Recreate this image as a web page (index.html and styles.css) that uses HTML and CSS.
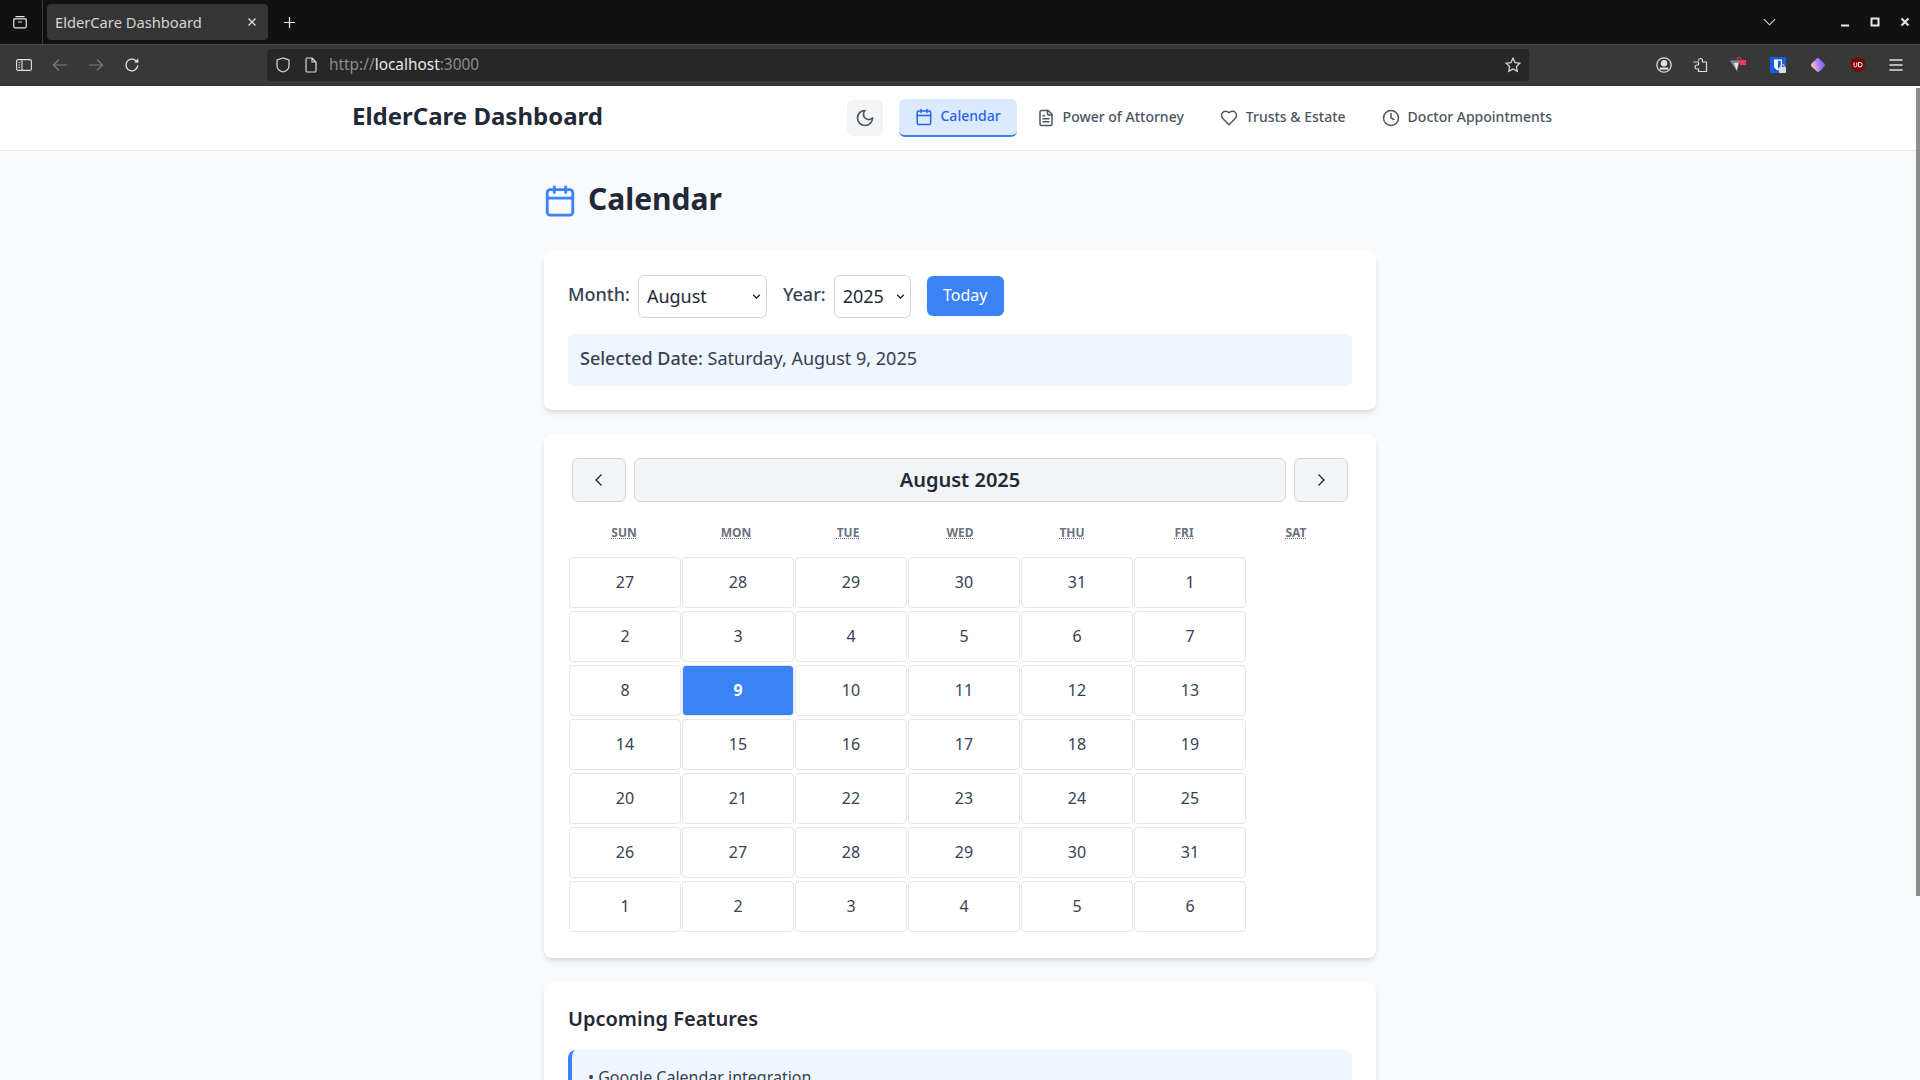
FILE: index.html
```html
<!DOCTYPE html>
<html lang="en">

<head>
    <meta charset="UTF-8">
    <meta name="viewport" content="width=device-width, initial-scale=1.0">
    <title>ElderCare Dashboard</title>
    <link rel="stylesheet" href="styles.css">
</head>

<body>
    <div class="tabbar">
        <div class="tabgroup">
            <svg class="ff-icon" viewBox="0 0 16 16" fill="none" stroke="#e8e8e8" stroke-width="1.2"><path d="M3.5 2.6h9M1.8 4.8h12.4M1.8 4.8v7.6a1.4 1.4 0 0 0 1.4 1.4h9.6a1.4 1.4 0 0 0 1.4-1.4V4.8M6 8h4"/></svg>
        </div>
        <div class="tab">
            <span class="tab-title">ElderCare Dashboard</span>
            <svg class="tab-close" viewBox="0 0 10 10" fill="none" stroke="#dcdcdc" stroke-width="1.4"><path d="M1.5 1.5l7 7M8.5 1.5l-7 7"/></svg>
        </div>
        <svg class="tab-new" viewBox="0 0 14 14" fill="none" stroke="#e8e8e8" stroke-width="1.3"><path d="M7 1v12M1 7h12"/></svg>
        <svg class="tab-list" viewBox="0 0 14 8" fill="none" stroke="#d8d8d8" stroke-width="1.2"><path d="M1 1l6 6 6-6"/></svg>
        <div class="winbtns">
            <svg viewBox="0 0 10 10" fill="#e8e8e8"><rect x="1" y="7.5" width="8" height="2"/></svg>
            <svg viewBox="0 0 10 10" fill="none" stroke="#e8e8e8" stroke-width="2"><rect x="1.5" y="1.5" width="7" height="7"/></svg>
            <svg viewBox="0 0 10 10" fill="none" stroke="#e8e8e8" stroke-width="2"><path d="M1.5 1.5l7 7M8.5 1.5l-7 7"/></svg>
        </div>
    </div>

    <div class="toolbar">
        <div class="nav-icons">
            <svg class="ff-icon" viewBox="0 0 16 16" fill="none" stroke="#e0e0e0" stroke-width="1.1"><rect x="0.6" y="2.6" width="14.8" height="10.8" rx="1.5"/><path d="M6 2.6v10.8M2.5 5.5h1.6M2.5 8h1.6M2.5 10.5h1.6"/></svg>
            <svg class="ff-icon" viewBox="0 0 16 16" fill="none" stroke="#7a7a7a" stroke-width="1.2"><path d="M15 8H1.5M7 2.5L1.5 8 7 13.5"/></svg>
            <svg class="ff-icon" viewBox="0 0 16 16" fill="none" stroke="#7a7a7a" stroke-width="1.2"><path d="M1 8h13.5M9 2.5L14.5 8 9 13.5"/></svg>
            <svg class="ff-icon" viewBox="0 0 16 16" fill="none" stroke="#e0e0e0" stroke-width="1.3"><path d="M13.8 8.4A5.9 5.9 0 1 1 11.6 3.4L14 5.2"/><path d="M14.3 1.2v4.4H9.9" fill="#e0e0e0" stroke="none"/></svg>
        </div>
        <div class="urlbar">
            <svg class="ff-icon" viewBox="0 0 16 16" fill="none" stroke="#dcdcdc" stroke-width="1.2"><path d="M8 1L2 3v5.5C2 12 5 14.3 8 15c3-.7 6-3 6-6.5V3z"/></svg>
            <svg class="ff-icon" viewBox="0 0 16 16" fill="none" stroke="#dcdcdc" stroke-width="1.2"><path d="M3 2.4A1.4 1.4 0 0 1 4.4 1H9l4 4v8.6a1.4 1.4 0 0 1-1.4 1.4H4.4A1.4 1.4 0 0 1 3 13.6zM9 1v4h4"/></svg>
            <span class="url"><span class="dim">http://</span>localhost<span class="dim">:3000</span></span>
            <svg class="ff-icon star" viewBox="0 0 16 16" fill="none" stroke="#dcdcdc" stroke-width="1.2"><path d="M8 1.2l2.1 4.4 4.8.6-3.5 3.3.9 4.8L8 12l-4.3 2.3.9-4.8L1.1 6.2l4.8-.6z"/></svg>
        </div>
        <div class="ext-icons">
            <svg class="ff-icon" viewBox="0 0 16 16" fill="none" stroke="#e0e0e0" stroke-width="1.2"><circle cx="8" cy="8" r="7.2"/><circle cx="8" cy="6.2" r="2.6" fill="#e0e0e0"/><path d="M3.6 11.6h8.8" stroke-width="2.2"/></svg>
            <svg class="ff-icon" viewBox="0 0 16 16" fill="none" stroke="#e0e0e0" stroke-width="1.2"><path d="M6.5 3.5a2 2 0 0 1 4 0V5h4v9.5h-8V12H5a2 2 0 0 1 0-4h1.5V5H1.500"/></svg>
            <svg class="ff-icon ext-near" viewBox="0 0 16 16"><path d="M0 3.500h10l-3 11z" fill="#8a8a94"/><path d="M4 6h4.500l-2 7z" fill="#e8e8e8"/><path d="M7.500 3V1.800a1.600 1.600 0 0 1 3.200 0V4" fill="none" stroke="#ff3355"/><rect x="10" y="3" width="6" height="5" fill="#ff3355"/></svg>
            <svg class="ff-icon ext-far" viewBox="0 0 16 16"><rect width="16" height="16" rx="1" fill="#175ddc"/><path d="M4 2.500h8v6c0 2.500-2 4-4 5-2-1-4-2.500-4-5z" fill="#fff"/><path d="M8 3.800h2.800V8.500c0 1.500-1.300 2.500-2.800 3.300z" fill="#175ddc"/><rect x="9" y="10" width="7" height="6" rx="1" fill="#dcdcdc"/><path d="M10.800 10V9a1.700 1.700 0 0 1 3.400 0v1" fill="none" stroke="#dcdcdc"/></svg>
            <svg class="ff-icon ext-far" viewBox="0 0 16 16"><defs><linearGradient id="gem" x1="0.8" y1="0" x2="0.2" y2="1"><stop offset="0" stop-color="#7b5cff"/><stop offset="0.55" stop-color="#b48cf5"/><stop offset="1" stop-color="#ffc9a8"/></linearGradient></defs><rect x="2.500" y="2.500" width="11" height="11" rx="2" transform="rotate(45 8 8)" fill="url(#gem)"/></svg>
            <svg class="ff-icon ext-far" viewBox="0 0 16 16"><path d="M8 .6l6.600 2v6.200c0 3-3.300 5.400-6.600 6.600-3.300-1.200-6.600-3.600-6.600-6.600V2.600z" fill="#800000"/><path d="M4 5.500v3a1.400 1.400 0 0 0 2.800 0v-3M8.500 5.500v4.400h1.500a2.200 2.200 0 0 0 0-4.400z" fill="none" stroke="#fff" stroke-width="1"/></svg>
            <svg class="ff-icon ext-near" viewBox="0 0 16 16" fill="none" stroke="#e0e0e0" stroke-width="1.3"><path d="M1.500 3h13M1.500 8h13M1.500 13h13"/></svg>
        </div>
    </div>

    <div class="page">
        <div class="scroll-thumb"></div>

        <header class="site-header">
            <div class="header-inner">
                <h1 class="logo">ElderCare Dashboard</h1>
                <nav class="nav">
                    <button class="theme-btn">
                        <svg class="nav-svg" viewBox="0 0 24 24" fill="none" stroke="currentColor" stroke-width="2" stroke-linecap="round" stroke-linejoin="round"><path d="M12 3a6 6 0 0 0 9 9 9 9 0 1 1-9-9z"/></svg>
                    </button>
                    <a class="nav-link active">
                        <svg class="nav-svg" viewBox="0 0 24 24" fill="none" stroke="currentColor" stroke-width="2" stroke-linecap="round" stroke-linejoin="round"><path d="M8 2v4M16 2v4"/><rect x="3" y="4" width="18" height="18" rx="2"/><path d="M3 10h18"/></svg>
                        Calendar
                    </a>
                    <a class="nav-link">
                        <svg class="nav-svg" viewBox="0 0 24 24" fill="none" stroke="currentColor" stroke-width="2" stroke-linecap="round" stroke-linejoin="round"><path d="M15 2H6a2 2 0 0 0-2 2v16a2 2 0 0 0 2 2h12a2 2 0 0 0 2-2V7z"/><path d="M14 2v4a2 2 0 0 0 2 2h4M10 9H8M16 13H8M16 17H8"/></svg>
                        Power of Attorney
                    </a>
                    <a class="nav-link">
                        <svg class="nav-svg" viewBox="0 0 24 24" fill="none" stroke="currentColor" stroke-width="2" stroke-linecap="round" stroke-linejoin="round"><path d="M19 14c1.490-1.460 3-3.210 3-5.500A5.500 5.500 0 0 0 16.500 3c-1.760 0-3 .5-4.500 2-1.500-1.500-2.740-2-4.500-2A5.500 5.500 0 0 0 2 8.500c0 2.300 1.500 4.050 3 5.500l7 7z"/></svg>
                        Trusts &amp; Estate
                    </a>
                    <a class="nav-link">
                        <svg class="nav-svg" viewBox="0 0 24 24" fill="none" stroke="currentColor" stroke-width="2" stroke-linecap="round" stroke-linejoin="round"><circle cx="12" cy="12" r="10"/><path d="M12 6v6l4 2"/></svg>
                        Doctor Appointments
                    </a>
                </nav>
            </div>
        </header>

        <main class="main">
            <div class="page-title">
                <svg class="title-icon" viewBox="0 0 24 24" fill="none" stroke="currentColor" stroke-width="2" stroke-linecap="round" stroke-linejoin="round"><path d="M8 2v4M16 2v4"/><rect x="3" y="4" width="18" height="18" rx="2"/><path d="M3 10h18"/></svg>
                <h2>Calendar</h2>
            </div>

            <section class="card">
                <div class="controls">
                    <label class="ctl-label" for="month">Month:</label>
                    <select id="month" class="ctl-select month-select">
                        <option>July</option>
                        <option selected>August</option>
                        <option>September</option>
                    </select>
                    <label class="ctl-label year-label" for="year">Year:</label>
                    <select id="year" class="ctl-select year-select">
                        <option>2024</option>
                        <option selected>2025</option>
                        <option>2026</option>
                    </select>
                    <button class="today-btn">Today</button>
                </div>
                <div class="selected-date"><span class="selected-label">Selected Date:</span> Saturday, August 9, 2025</div>
            </section>

            <section class="card">
                <div class="cal-nav">
                    <button class="cal-arrow">
                        <svg viewBox="0 0 16 16" fill="none" stroke="currentColor" stroke-width="1.3"><path d="M10.500 2.500L5 8l5.500 5.500"/></svg>
                    </button>
                    <button class="cal-title">August 2025</button>
                    <button class="cal-arrow">
                        <svg viewBox="0 0 16 16" fill="none" stroke="currentColor" stroke-width="1.3"><path d="M5.500 2.500L11 8l-5.500 5.500"/></svg>
                    </button>
                </div>
                <div class="weekdays">
                    <abbr>Sun</abbr><abbr>Mon</abbr><abbr>Tue</abbr><abbr>Wed</abbr><abbr>Thu</abbr><abbr>Fri</abbr><abbr>Sat</abbr>
                </div>
                <div class="days">
                    <button>27</button><button>28</button><button>29</button><button>30</button><button>31</button><button>1</button>
                    <button>2</button><button>3</button><button>4</button><button>5</button><button>6</button><button>7</button>
                    <button>8</button><button class="selected">9</button><button>10</button><button>11</button><button>12</button><button>13</button>
                    <button>14</button><button>15</button><button>16</button><button>17</button><button>18</button><button>19</button>
                    <button>20</button><button>21</button><button>22</button><button>23</button><button>24</button><button>25</button>
                    <button>26</button><button>27</button><button>28</button><button>29</button><button>30</button><button>31</button>
                    <button>1</button><button>2</button><button>3</button><button>4</button><button>5</button><button>6</button>
                </div>
            </section>

            <section class="card">
                <h3>Upcoming Features</h3>
                <div class="feature-box">
                    <p>• Google Calendar integration</p>
                </div>
            </section>
        </main>
    </div>
</body>

</html>
```

FILE: styles.css
```css
* {
    box-sizing: border-box;
    padding: 0;
    margin: 0;
}

html,
body {
    height: 100%;
    overflow: hidden;
}

body {
    display: flex;
    flex-direction: column;
    font-family: "Noto Sans", sans-serif;
    background-color: #f9fafb;
}

/* browser chrome */
.tabbar {
    height: 44px;
    background-color: #111111;
    display: flex;
    align-items: center;
    flex-shrink: 0;
}

.tabgroup {
    width: 43px;
    height: 44px;
    border-right: 1px solid #3a3a3a;
    display: flex;
    align-items: center;
    justify-content: center;
    padding-right: 2px;
}

.ff-icon {
    width: 16px;
    height: 16px;
    flex-shrink: 0;
}

.tab {
    width: 221px;
    height: 36px;
    margin-left: 4px;
    padding: 0 9px 0 8px;
    background-color: #353535;
    border-radius: 4px;
    display: flex;
    align-items: center;
    justify-content: space-between;
}

.tab-title {
    color: #d4d4d4;
    font-size: 14.7px;
    padding-bottom: 1px;
}

.tab-close {
    width: 10px;
    height: 10px;
    margin-right: 2px;
}

.tab-new {
    width: 13px;
    height: 13px;
    margin-left: 15px;
}

.tab-list {
    width: 13px;
    height: 8px;
    margin-left: auto;
}

.winbtns {
    display: flex;
    gap: 20px;
    margin-left: 64px;
    margin-right: 10px;
}

.winbtns svg {
    width: 10px;
    height: 10px;
}

.toolbar {
    height: 42px;
    background-color: #383838;
    border-top: 1px solid #4a4a4a;
    display: flex;
    align-items: center;
    flex-shrink: 0;
    padding-bottom: 1px;
}

.nav-icons {
    width: 267px;
    padding-left: 16px;
    display: flex;
    gap: 20px;
}

.urlbar {
    width: 1262px;
    height: 32px;
    background-color: #272727;
    border-radius: 4px;
    display: flex;
    align-items: center;
    padding: 0 8px;
}

.urlbar .ff-icon + .ff-icon {
    margin-left: 12px;
}

.url {
    margin-left: 10px;
    margin-top: -2px;
    color: #e8e8e8;
    font-size: 15.4px;
}

.dim {
    color: #8e8e8e;
}

.urlbar .star {
    margin-left: auto;
}

.ext-icons {
    display: flex;
    margin-left: 127px;
    gap: 20px;
}

.ext-near {
    margin-left: 2px;
}

.ext-far {
    margin-left: 4px;
}

/* page */
.page {
    flex: 1;
    position: relative;
    overflow: hidden;
}

.scroll-thumb {
    position: absolute;
    top: 2px;
    right: 0;
    width: 4px;
    height: 808px;
    background-color: #8a8d8c;
}

.site-header {
    height: 65px;
    background-color: #ffffff;
    border-bottom: 1px solid #e5e7eb;
}

.header-inner {
    max-width: 1280px;
    height: 64px;
    margin: 0 auto;
    padding: 0 32px;
    display: flex;
    align-items: center;
    justify-content: space-between;
}

.logo {
    font-size: 24px;
    font-weight: 700;
    color: #1f2937;
    margin-bottom: 5px;
}

.nav {
    display: flex;
    align-items: center;
    gap: 4px;
}

.theme-btn {
    width: 36px;
    height: 36px;
    margin-right: 12px;
    border: none;
    border-radius: 6px;
    background-color: #f3f4f6;
    color: #4b5563;
    display: flex;
    align-items: center;
    justify-content: center;
}

.theme-btn .nav-svg {
    width: 20px;
    height: 20px;
}

.nav-link {
    display: flex;
    align-items: center;
    gap: 8px;
    height: 38px;
    padding: 0 16px 4px;
    font-size: 14px;
    color: #4b5563;
    font-weight: 500;
}

.nav-link .nav-svg {
    margin-top: 4px;
}

.nav-link.active {
    width: 118px;
    background-color: #dbeafe;
    color: #2563eb;
    border-radius: 6px;
    border-bottom: 2px solid #3b82f6;
}

.nav-svg {
    width: 18px;
    height: 18px;
}

.main {
    max-width: 896px;
    margin: 0 auto;
    padding: 27px 32px 0;
}

.page-title {
    display: flex;
    align-items: center;
    gap: 11px;
    height: 40px;
    margin-bottom: 33px;
    margin-left: -1px;
}

.title-icon {
    width: 34px;
    height: 34px;
    color: #3b82f6;
    margin-top: 5px;
}

.page-title h2 {
    font-size: 30px;
    font-weight: 700;
    color: #1f2937;
}

.card {
    background-color: #ffffff;
    border-radius: 8px;
    box-shadow: 0 4px 6px -1px rgba(0, 0, 0, 0.1), 0 2px 4px -2px rgba(0, 0, 0, 0.1);
    padding: 24px;
    margin-bottom: 24px;
}

.controls {
    display: flex;
    align-items: center;
    height: 44px;
    margin-bottom: 15px;
}

.ctl-label {
    font-size: 18px;
    font-weight: 500;
    color: #374151;
    margin-right: 8px;
    margin-top: -7px;
}

.year-label {
    margin-left: 16px;
}

.ctl-select {
    appearance: none;
    height: 43px;
    margin-top: -2px;
    padding: 0 8px;
    border: 1px solid #d1d5db;
    border-radius: 6px;
    background-color: #ffffff;
    background-image: url("data:image/svg+xml,%3Csvg xmlns='http://www.w3.org/2000/svg' viewBox='0 0 10 6'%3E%3Cpath d='M1 1l4 4 4-4' fill='none' stroke='%23222' stroke-width='1.6'/%3E%3C/svg%3E");
    background-repeat: no-repeat;
    background-position: right 5px center;
    background-size: 9px 5px;
    font-family: "Noto Sans", sans-serif;
    font-size: 18px;
    color: #1f2937;
}

.month-select {
    width: 129px;
}

.year-select {
    width: 77px;
}

.today-btn {
    width: 77px;
    height: 40px;
    margin-left: 16px;
    margin-top: -3px;
    padding-bottom: 2px;
    border: none;
    border-radius: 6px;
    background-color: #3b82f6;
    color: #ffffff;
    font-family: "Noto Sans", sans-serif;
    font-size: 16px;
    font-weight: 400;
}

.selected-date {
    height: 52px;
    padding: 12px;
    background-color: #eff6ff;
    border-radius: 6px;
    font-size: 18px;
    color: #374151;
}

.selected-label {
    font-weight: 500;
}

.cal-nav {
    display: flex;
    gap: 8px;
    padding: 0 4px;
    margin-bottom: 19px;
}

.cal-nav button {
    height: 44px;
    border: 1px solid #d1d5db;
    border-radius: 6px;
    background-color: #f3f4f6;
    color: #1f2937;
    font-family: "Noto Sans", sans-serif;
}

.cal-arrow {
    width: 54px;
    display: flex;
    align-items: center;
    justify-content: center;
    color: #374151;
}

.cal-arrow svg {
    width: 16px;
    height: 16px;
}

.cal-nav .cal-title {
    flex: 1;
    padding-bottom: 2px;
    font-size: 20px;
    font-weight: 600;
}

.weekdays {
    display: grid;
    grid-template-columns: repeat(7, 112px);
    height: 24px;
    margin-bottom: 12px;
    text-align: center;
}

.weekdays abbr {
    font-size: 12px;
    font-weight: 700;
    line-height: 24px;
    text-transform: uppercase;
    text-decoration: underline dotted;
    color: #6b7280;
}

.days {
    display: grid;
    grid-template-columns: repeat(6, 112px);
    grid-auto-rows: 51px;
    column-gap: 1px;
    row-gap: 3px;
    margin-left: 1px;
    margin-bottom: 2px;
}

.days button {
    padding-bottom: 2px;
    border: 1px solid #e5e7eb;
    border-radius: 4px;
    background-color: #ffffff;
    color: #374151;
    font-family: "Noto Sans", sans-serif;
    font-size: 16px;
}

.days button.selected {
    background-color: #3b82f6;
    color: #ffffff;
    font-weight: 700;
}

.card h3 {
    margin-top: -1px;
    font-size: 20px;
    font-weight: 600;
    color: #1f2937;
    margin-bottom: 18px;
}

.feature-box {
    background-color: #eff6ff;
    border-left: 4px solid #3b82f6;
    border-radius: 8px;
    padding: 16px;
    color: #374151;
    font-size: 16px;
}
```
